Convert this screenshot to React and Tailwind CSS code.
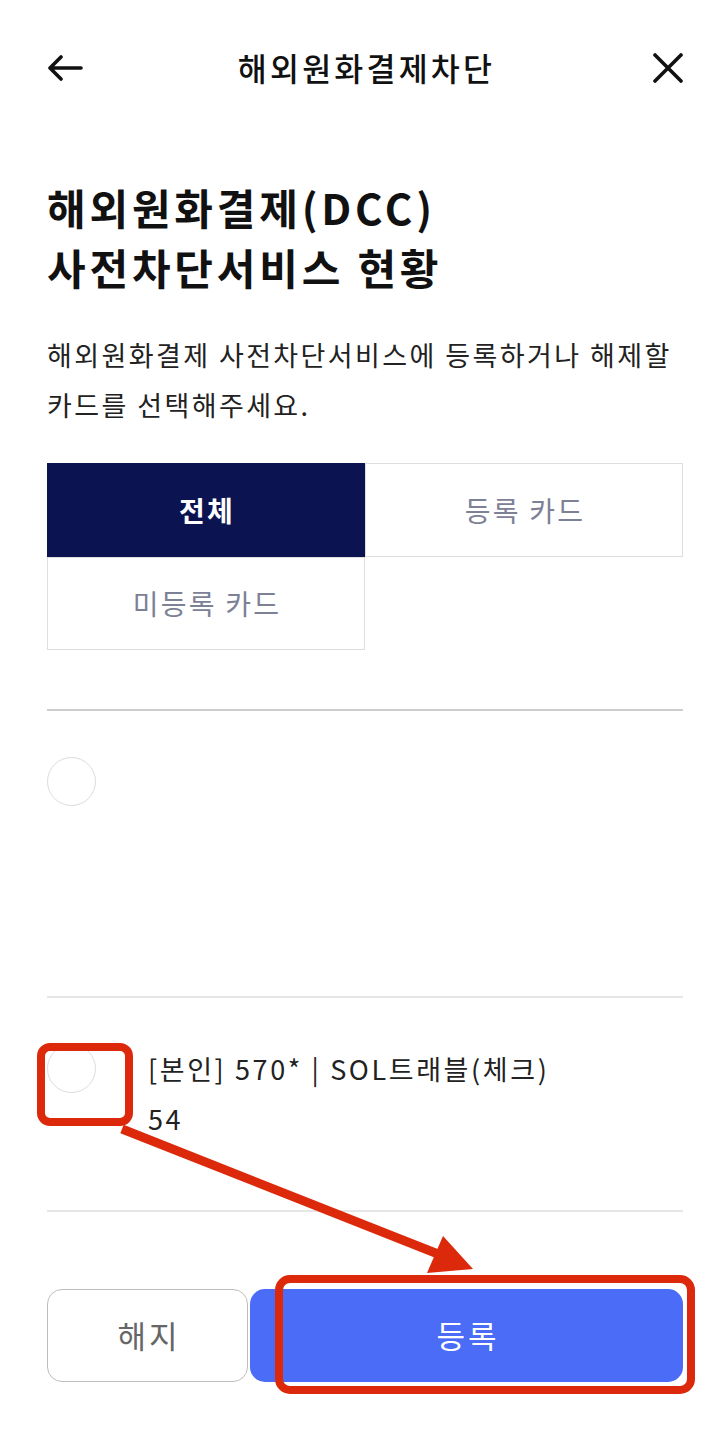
import React from 'react';

const FONT = "font-['Noto_Sans_CJK_KR','Noto_Sans',sans-serif]";

function BackIcon() {
  return (
    <svg width="36" height="26" viewBox="0 0 36 26" fill="none">
      <path d="M34 13H3M14 2L3 13L14 24" stroke="#111" strokeWidth="3.6" strokeLinecap="round" strokeLinejoin="round" />
    </svg>
  );
}

function CloseIcon() {
  return (
    <svg width="30" height="30" viewBox="0 0 30 30" fill="none">
      <path d="M2 2L28 28M28 2L2 28" stroke="#111" strokeWidth="3.6" strokeLinecap="round" />
    </svg>
  );
}

function Radio() {
  return <div className="h-[49px] w-[49px] shrink-0 rounded-full border-[1.5px] border-[#dcdcdc] bg-white" />;
}

// 빨간 표시 (스크린샷 위 주석)
function Annotations() {
  return (
    <svg className="pointer-events-none absolute left-0 top-0" width="707" height="1440" viewBox="0 0 707 1440" fill="none">
      <rect x="41" y="1047" width="88" height="75" rx="9" stroke="#dc290b" strokeWidth="8" />
      <rect x="279" y="1279" width="412" height="111" rx="11" stroke="#dc290b" strokeWidth="8" />
      <path d="M122 1129L438 1254" stroke="#dc290b" strokeWidth="9" />
      <polygon points="443,1236 427,1273 473,1269" fill="#dc290b" />
    </svg>
  );
}

export default function App() {
  const tabs = [
    { label: '전체', active: true },
    { label: '등록 카드', active: false },
    { label: '미등록 카드', active: false },
  ];

  return (
    <div className={`relative min-h-[1440px] w-full bg-white text-[#111] ${FONT}`}>
      <div className="pl-[47px] pr-[24px]">
        {/* header */}
        <div className="flex h-[136px] items-center">
          <div className="flex w-[60px] items-center"><BackIcon /></div>
          <div className="flex-1 pl-[3px] text-center text-[31.5px] font-medium leading-none tracking-[3.2px]">해외원화결제차단</div>
          <div className="flex w-[60px] justify-end"><CloseIcon /></div>
        </div>

        <h1 className="mt-[41px] text-[42px] font-bold leading-[60px] tracking-[3.8px] text-[#111]">
          해외원화결제(DCC)
          <br />
          사전차단서비스 현황
        </h1>

        <p className="mt-[33px] text-[27px] leading-[50px] tracking-[2.4px] text-[#222]">
          해외원화결제 사전차단서비스에 등록하거나 해제할
          <br />
          카드를 선택해주세요.
        </p>

        <div className="mt-[33px] grid grid-cols-2">
          {tabs.map(t => (
            <div
              key={t.label}
              className={`flex h-[93.5px] items-center justify-center pl-[2px] text-[28px] tracking-[2.2px] ${
                t.active
                  ? 'bg-[#0b1450] font-bold text-white'
                  : 'border-[1.5px] border-[#dedede] bg-white text-[#7d8196]'
              }`}
            >
              {t.label}
            </div>
          ))}
        </div>

        <div className="mt-[59px] h-[2px] bg-[#cdcdcd]" />

        <div className="h-[285px] pt-[46px]">
          <Radio />
        </div>

        <div className="h-[2px] bg-[#e6e6e6]" />

        <div className="flex h-[212px] items-start gap-[52px] pt-[46px]">
          <Radio />
          <div className="text-[27px] leading-[50px] tracking-[2.6px] text-[#222]">
            [본인] 570* | SOL트래블(체크)
            <br />
            54
          </div>
        </div>

        <div className="h-[2px] bg-[#e6e6e6]" />

        <div className="mt-[77px] flex gap-[2px]">
          <button className="flex h-[93px] w-[201px] items-center justify-center rounded-[15px] border-[1.5px] border-[#bdbdbd] bg-white pl-[3px] text-[31px] tracking-[3px] text-[#666]">
            해지
          </button>
          <button className="flex h-[93px] flex-1 items-center justify-center rounded-[15px] bg-[#4a6cf7] pl-[3px] text-[31px] tracking-[3px] text-white">
            등록
          </button>
        </div>
      </div>

      <Annotations />
    </div>
  );
}
